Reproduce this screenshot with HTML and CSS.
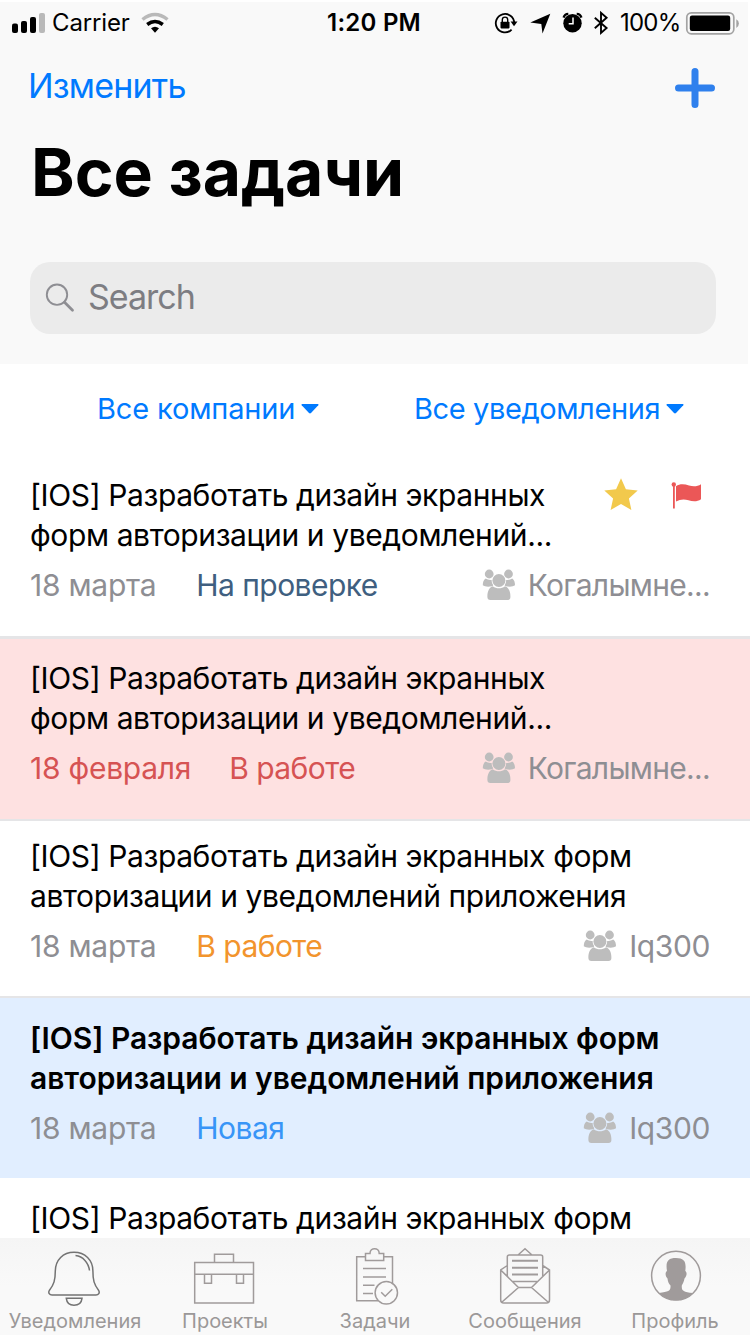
FILE: index.html
```html
<!DOCTYPE html>
<html lang="ru">
<head>
<meta charset="utf-8">
<title>Все задачи</title>
<link rel="stylesheet" href="styles.css">
</head>
<body>
<svg class="defs" width="0" height="0" aria-hidden="true">
  <symbol id="people" viewBox="0 0 34 32">
    <circle cx="7.2" cy="5" r="4.4"/><circle cx="26.5" cy="5" r="4.4"/>
    <path d="M3.600 9.600C1.500 11 .8 13.400 .8 16.300C2.500 17.600 6 18 9.700 17.300C11.300 16.900 11.500 16.300 10.500 15C9.900 13.800 9.600 12.500 9.600 10.900C7.500 11.200 5.500 10.800 3.600 9.600Z"/>
    <path d="M30.200 9.600C32.300 11 33 13.400 33 16.300C31.300 17.600 27.800 18 24.100 17.300C22.500 16.900 22.300 16.300 23.300 15C23.900 13.800 24.200 12.500 24.200 10.900C26.300 11.200 28.300 10.800 30.200 9.600Z"/>
    <circle cx="16.900" cy="11.500" r="6.500"/>
    <path d="M10.800 17.200C14.500 19.900 19.300 19.900 23 17.200C26.600 18.300 28.600 22.500 28.400 28C28.400 30 27.400 31 25.400 31H8.400C6.400 31 5.400 30 5.400 28C5.200 22.500 7.200 18.300 10.800 17.200Z"/>
  </symbol>
</svg>

<header class="header">
  <div class="status-bar">
    <div class="status-left">
      <svg width="36" height="24" viewBox="11 10 36 24">
        <rect x="12" y="22.500" width="6" height="9.500" rx="2"/><rect x="21" y="20" width="6" height="12" rx="2"/><rect x="30" y="16" width="6" height="16" rx="2"/><rect x="39" y="12" width="6" height="20" rx="2" fill="#b9b9b9"/>
      </svg>
      <span class="carrier">Carrier</span>
      <svg width="30" height="24" viewBox="140 10 30 24" fill="none" stroke-width="3.500">
        <path d="M142.500 18.500Q155 8.500 167.500 18.500" stroke="#b9b9b9"/>
        <path d="M147.200 23.500Q155 17.500 162.800 23.500" stroke="#000"/>
        <path d="M151 27.300Q155 24.300 159 27.300L155 31.800Z" fill="#000"/>
      </svg>
    </div>
    <span class="time">1:20 PM</span>
    <div class="status-right">
      <svg width="116" height="26" viewBox="494 9 116 26">
        <path d="M514.200 22A9.200 9.200 0 1 0 511.600 28.600" fill="none" stroke="#000" stroke-width="1.800"/>
        <path d="M510.600 20.600H517.500L514 25.200Z"/>
        <rect x="500.500" y="20.800" width="9" height="6.600" rx=".8"/>
        <path d="M502.300 21V18.800A2.700 2.700 0 0 1 507.700 18.800V21" fill="none" stroke="#000" stroke-width="1.400"/>
        <path d="M550.300 12.700L542.500 32.500L541.300 22.900L530.300 21.600Z"/>
        <circle cx="572.500" cy="22.200" r="9.200"/>
        <path d="M563.600 16.600A5 5 0 0 1 568.300 12.800M576.700 12.800A5 5 0 0 1 581.400 16.600" fill="none" stroke="#000" stroke-width="2.300"/>
        <path d="M573 16.500V22.800H568.700" fill="none" stroke="#fff" stroke-width="1.500"/>
        <path d="M594.800 16.700L606.600 27L601 32V11.800L606.600 16.700L594.800 27.300" fill="none" stroke="#000" stroke-width="1.900"/>
      </svg>
      <span class="percent">100%</span>
      <svg width="54" height="26" viewBox="685 9 54 26">
        <rect x="686.800" y="11.800" width="47" height="21" rx="4.500" fill="none" stroke="#a3a3a3" stroke-width="1.700"/>
        <rect x="689.800" y="14.600" width="40.400" height="15.400" rx="2.200"/>
        <path d="M736.300 18.300Q738.900 19.500 738.900 22.500T736.300 27Z" fill="#a3a3a3"/>
      </svg>
    </div>
  </div>
  <div class="nav">
    <span class="edit">Изменить</span>
    <svg class="add" width="40" height="40" viewBox="0 0 40 40"><path d="M20 3.500V36.500M3.500 20H36.500" stroke="#2f80ed" stroke-width="7" stroke-linecap="round"/></svg>
  </div>
  <h1 class="title">Все задачи</h1>
  <div class="search">
    <svg width="30" height="30" viewBox="45 282 30 30" fill="none" stroke="#8e8e93">
      <circle cx="57" cy="293.700" r="10.200" stroke-width="1.900"/><path d="M64.500 301.200L72.500 309.200" stroke-width="2.800" stroke-linecap="round"/>
    </svg>
    <span class="search-text">Search</span>
  </div>
</header>

<main>
  <div class="filters">
    <div class="filter"><span class="companies">Все компании</span><svg width="18" height="10" viewBox="0 0 18 10"><path d="M1 0H17Q18 .500 17.300 1.300L10 9Q9 9.800 8 9L.7 1.300Q0 .500 1 0Z"/></svg></div>
    <div class="filter"><span class="notices">Все уведомления</span><svg width="18" height="10" viewBox="0 0 18 10"><path d="M1 0H17Q18 .500 17.300 1.300L10 9Q9 9.800 8 9L.7 1.300Q0 .500 1 0Z"/></svg></div>
  </div>

  <article class="task task-review">
    <div class="task-head">
      <p class="name">[IOS] Разработать дизайн экранных<br>форм авторизации и уведомлений...</p>
      <div class="marks">
        <svg width="34" height="32" viewBox="0 0 34 32"><path d="M17 .3L21.900 11.200L33.700 12.400L24.900 20.400L27.400 32L17 26L6.600 32L9.100 20.400L.3 12.400L12.100 11.200Z" fill="#f2c94c"/></svg>
        <svg width="31" height="27" viewBox="0 0 31 27" fill="#eb5757"><circle cx="2.800" cy="2.500" r="2.200"/><rect x="2" y="3" width="1.800" height="23.500"/><path d="M5 4.200C9 1.400 13.500 2 18 3.500C22.500 4.800 26.500 4.500 30 2.200V17.300C26 20 21.500 19.600 17.500 18.200C13 16.800 9 17.200 5 19.500Z"/></svg>
      </div>
    </div>
    <div class="meta"><span class="date">18 марта</span><span class="state review">На проверке</span><span class="org"><svg width="34" height="32"><use href="#people"/></svg><span class="org-long">Когалымне...</span></span></div>
  </article>

  <article class="task task-overdue">
    <p class="name">[IOS] Разработать дизайн экранных<br>форм авторизации и уведомлений...</p>
    <div class="meta"><span class="date late">18 февраля</span><span class="state late">В работе</span><span class="org"><svg width="34" height="32"><use href="#people"/></svg><span class="org-long">Когалымне...</span></span></div>
  </article>

  <article class="task task-progress">
    <p class="name">[IOS] Разработать дизайн экранных форм<br>авторизации и уведомлений приложения</p>
    <div class="meta"><span class="date">18 марта</span><span class="state progress">В работе</span><span class="org"><svg width="34" height="32"><use href="#people"/></svg><span class="org-short">Iq300</span></span></div>
  </article>

  <article class="task task-new">
    <p class="name unread">[IOS] Разработать дизайн экранных форм<br>авторизации и уведомлений приложения</p>
    <div class="meta"><span class="date">18 марта</span><span class="state fresh">Новая</span><span class="org"><svg width="34" height="32"><use href="#people"/></svg><span class="org-short">Iq300</span></span></div>
  </article>

  <article class="task task-last">
    <p class="name">[IOS] Разработать дизайн экранных форм</p>
  </article>
</main>

<nav class="tabs">
  <div class="tab"><svg viewBox="0 1238 150 70" stroke="#737373">
    <path d="M74 1252.300C63 1252.300 55.500 1260 55.300 1271C55.300 1280 54 1284.500 49.300 1290.500C48 1292.800 49.500 1295 52 1295H96C98.500 1295 100 1292.800 98.700 1290.500C94 1284.500 92.900 1280 92.900 1271C92.900 1260 85 1252.300 74 1252.300Z"/><path d="M75.500 1255.600C83 1256.500 88.500 1262.500 89.500 1270.500M66.300 1298.300H82C81.500 1302.500 78.500 1305.200 74 1305.200S66.800 1302.500 66.300 1298.300Z"/></svg><span>Уведомления</span></div>
  <div class="tab"><svg viewBox="150 1238 150 70" stroke="#a09b9b">
    <path d="M194.700 1262.500H253.500V1303H194.700ZM194.700 1274.300H253.500M214.500 1262.500V1254.300H233.500V1262.500M204.500 1274.300V1283.300H211.500V1274.300M236.500 1274.300V1283.300H243.500V1274.300"/></svg><span>Проекты</span></div>
  <div class="tab"><svg viewBox="300 1238 150 70" stroke="#a09b9b">
    <path d="M365.500 1256.800H356.700V1300.700H378M383.700 1256.800H392.500V1283.500M365.500 1253.500H370C370 1247 379.200 1247 379.200 1253.500H383.700V1260.500H365.500ZM363 1268.500H386M363 1277H386M363 1285.300H374.500M363 1293.500H373M381.200 1292.300L385.200 1296.200L392.300 1289.300"/><circle cx="386.300" cy="1292.800" r="11.200"/></svg><span>Задачи</span></div>
  <div class="tab"><svg viewBox="450 1238 150 70" stroke="#a09b9b">
    <path d="M507.300 1265.500L500.700 1270V1300Q500.700 1303 503.700 1303H546.500Q549.500 1303 549.500 1300V1270L542.700 1265.500M507.300 1276V1257Q507.300 1255 509.300 1255H540.700Q542.700 1255 542.700 1257V1276M518 1255L525 1248.700L532 1255M500.700 1270L518.500 1287.500H531.500L549.500 1270M502 1302L518.500 1287.500M548 1302L531.500 1287.500M513 1281.500H537"/><path d="M512 1260.700H538M512 1267.700H538M512 1274.500H538" stroke-width="2.100"/></svg><span>Сообщения</span></div>
  <div class="tab"><svg viewBox="600 1238 150 70" stroke="#a09b9b">
    <circle cx="676" cy="1275.700" r="24.400"/><path d="M667 1271C665.500 1262 667.500 1258 676 1258S686.500 1262 685.300 1271C687.600 1272.500 686.500 1276.500 684.500 1278.500C684 1282 682.500 1284 681.800 1285.500C681.500 1291 683 1291.500 693 1293C683.500 1302.700 668.500 1302.700 659 1293C669 1291.500 670.800 1291 670.500 1285.500C669 1284 667.800 1282 667.500 1278.500C665.500 1276.500 664.700 1272.500 667 1271Z" fill="#a09b9b" stroke="none"/></svg><span>Профиль</span></div>
</nav>
</body>
</html>
```
FILE: styles.css
```css
* { box-sizing: border-box; }
body { margin: 0; width: 750px; height: 1335px; overflow: hidden; background: #fff; color: #000; font: 30px/40px Inter, "Noto Sans", sans-serif; white-space: nowrap; font-kerning: normal; }
svg { display: block; flex: none; }
h1, p { margin: 0; }
.defs { position: absolute; }

.header { width: 748px; height: 362px; margin-top: 2px; background: #f9f9f9; display: flex; flex-direction: column; }
.status-bar { display: grid; grid-template-columns: 300px 148px 291px; height: 40px; align-items: center; font-size: 24px; line-height: 42px; }
.status-left, .status-right { display: flex; align-items: center; }
.status-left { padding-left: 11px; }
.status-right { justify-content: flex-end; }
.carrier { width: 93px; padding-left: 5px; letter-spacing: -0.150px; }
.time { text-align: center; font-weight: 600; letter-spacing: 0.250px; }
.percent { width: 75px; padding-left: 10px; letter-spacing: -0.800px; }
.nav { display: flex; justify-content: space-between; height: 50px; margin-top: 19px; padding: 5px 33px 0 28px; color: #007aff; }
.add { margin-top: 2px; }
.edit { font-size: 34px; letter-spacing: -0.800px; }
.title { margin: 21px 0 0 31px; font-size: 66px; line-height: 80px; font-weight: 700; letter-spacing: 0; }
.search { display: flex; align-items: center; gap: 13px; width: 686px; height: 72px; margin: 50px 0 0 30px; padding: 0 15px; border-radius: 20px; background: #ebebeb; color: #7d7d82; font-size: 34px; }
.search-text { letter-spacing: -1px; padding-bottom: 2px; }

.filters { display: grid; grid-template-columns: 317px 1fr; height: 91px; padding: 25px 0 0 97px; color: #007aff; font-size: 29px; }
.filter { display: flex; align-items: center; gap: 6px; height: 40px; fill: #007aff; }
.companies { letter-spacing: -0.150px; }
.notices { letter-spacing: -0.400px; }

.task { padding: 0 40px 0 30px; border-bottom: 2px solid #e5e5e7; }
.task-review { height: 184px; padding-top: 20px; border-bottom-width: 3px; }
.task-overdue { height: 182px; padding-top: 19px; background: #fee1e1; }
.task-progress { height: 177px; padding-top: 15px; }
.task-new { height: 180px; padding-top: 20px; background: #e1eeff; border-bottom: 0; }
.task-last { height: 60px; padding-top: 20px; border-bottom: 0; }
.task-head { display: flex; justify-content: space-between; }
.marks { display: flex; gap: 33px; padding: 3px 8px 0 0; align-items: flex-start; }
.marks svg + svg { margin-top: 4px; }
.name { letter-spacing: -0.390px; }
.unread { font-weight: 600; letter-spacing: -0.050px; }
.meta { display: flex; align-items: center; margin-top: 10px; color: #8e8e93; }
.date { letter-spacing: -0.250px; }
.state { margin-left: 40px; letter-spacing: -0.550px; }
.state.late { margin-left: 38px; }
.org { display: flex; align-items: center; gap: 12px; margin-left: auto; }
.org svg { fill: #bdbdbd; }
.org-long { letter-spacing: -0.680px; }
.org-short { letter-spacing: -0.400px; }
.review { color: #3f5f80; }
.meta .late { color: #d65353; }
.progress { color: #f2942d; }
.fresh { color: #3895f7; }

.tabs { display: grid; grid-template-columns: repeat(5, 150px); height: 97px; background: linear-gradient(#f5f5f5, #f9f9f9 50%); color: #9b9898; font-size: 20px; line-height: 26px; }
.tab { text-align: center; }
.tab svg { width: 150px; height: 70px; fill: none; stroke-width: 1.500px; }
```
